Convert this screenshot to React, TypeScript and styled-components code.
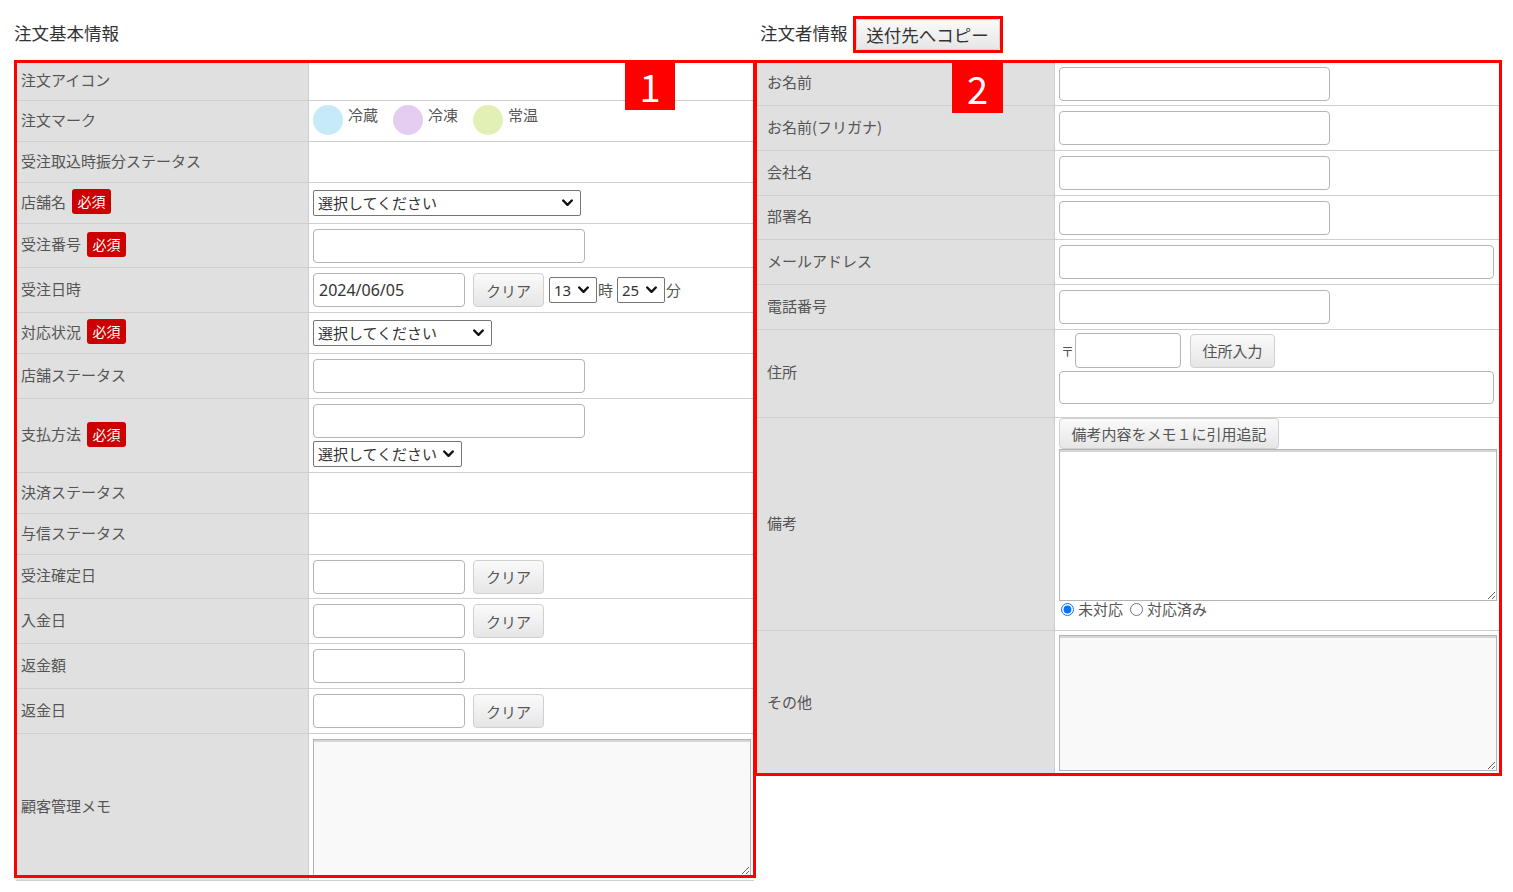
import React from 'react';
import styled, { createGlobalStyle } from 'styled-components';

const FONT = `"Noto Sans CJK JP", "Noto Sans", sans-serif`;
const FIELD_FONT = `"Noto Sans", "Noto Sans CJK JP", sans-serif`;

const Global = createGlobalStyle`
  html, body { margin: 0; padding: 0; background: #fff; }
  body { font-family: ${FONT}; color: #555; font-size: 15px; line-height: 20px; }
  * { box-sizing: border-box; }
`;

const Page = styled.div`
  display: flex;
  align-items: flex-start;
  gap: 3px;
  padding-left: 14px;
`;

const Section = styled.section<{ $w: number }>`
  position: relative;
  flex: none;
  width: ${p => p.$w}px;
`;

const Header = styled.div<{ $pl: number }>`
  height: 62px;
  padding: 4px 0 0 ${p => p.$pl}px;
  display: flex;
  align-items: center;
  gap: 5px;
  font-size: 17.5px;
  color: #333;
`;

const CopyFrame = styled.div`
  display: inline-flex;
  border: 3px solid #f00;
  margin-top: 3px;
`;

const CopyButton = styled.button`
  width: 144px;
  height: 31px;
  padding: 0;
  border: 1px solid #d2d2d2;
  border-radius: 3px;
  background: linear-gradient(#fafafa, #e6e6e6);
  font: 17.5px/1 ${FONT};
  color: #333;
`;

const Table = styled.div<{ $ml: number }>`
  margin-left: ${p => p.$ml}px;
  display: flex;
  flex-direction: column;
`;

const Row = styled.div<{ $h: number; $label: number }>`
  display: grid;
  grid-template-columns: ${p => p.$label}px 1fr;
  height: ${p => p.$h}px;
  border-bottom: 1px solid #cfcfcf;
`;

const Label = styled.div<{ $pl: number }>`
  display: flex;
  align-items: center;
  gap: 6px;
  padding: 0 0 3px ${p => p.$pl}px;
  background: #e0e0e0;
  border-right: 1px solid #cfcfcf;
  color: #555;
  white-space: nowrap;
`;

const Required = styled.span`
  display: inline-block;
  padding: 2px 5.5px;
  border-radius: 3px;
  background: #cc0000;
  color: #fff;
  font-size: 14px;
  line-height: 21px;
`;

const Value = styled.div<{ $top?: number }>`
  display: flex;
  flex-direction: column;
  justify-content: ${p => (p.$top !== undefined ? 'flex-start' : 'center')};
  align-items: flex-start;
  gap: 3px;
  padding: ${p => (p.$top !== undefined ? p.$top : 4)}px 4px 4px 4px;
  background: #fff;
  min-width: 0;
`;

const Line = styled.div<{ $gap?: number }>`
  display: flex;
  align-items: center;
  gap: ${p => p.$gap ?? 8}px;
`;

const TextInput = styled.input<{ $w: number; $h?: number }>`
  width: ${p => p.$w}px;
  height: ${p => p.$h ?? 34}px;
  margin: 0;
  padding: 0 5px;
  border: 1px solid #b4b4b4;
  border-radius: 4px;
  background: #fff;
  font: 16px ${FIELD_FONT};
  color: #333;
`;

const Button = styled.button<{ $w: number; $h?: number }>`
  width: ${p => p.$w}px;
  height: ${p => p.$h ?? 34}px;
  margin: 0;
  padding: 0;
  border: 1px solid #d0d0d0;
  border-radius: 4px;
  background: linear-gradient(#fafafa, #e6e6e6);
  font: 15px ${FONT};
  color: #555;
`;

const SelectWrap = styled.span<{ $w: number }>`
  position: relative;
  display: inline-flex;
  width: ${p => p.$w}px;
  height: 26px;
`;

const SelectField = styled.select`
  appearance: none;
  -webkit-appearance: none;
  width: 100%;
  height: 100%;
  margin: 0;
  padding: 0 20px 0 4px;
  border: 1px solid #767676;
  border-radius: 2px;
  background: #fff;
  font: 15px/24px ${FIELD_FONT};
  color: #333;
`;

const Chevron = styled.svg`
  position: absolute;
  right: 8px;
  top: 50%;
  width: 11px;
  height: 8px;
  margin-top: -4px;
  pointer-events: none;
`;

const Unit = styled.span`
  margin-left: -4px;
  margin-right: -1px;
  color: #555;
`;

const Memo = styled.textarea<{ $w: number; $h: number; $bg: string }>`
  display: block;
  width: ${p => p.$w}px;
  height: ${p => p.$h}px;
  margin: 0;
  border: 1px solid #b4b4b4;
  box-shadow: inset 0 2px 0 #d6d6d6;
  background: ${p => p.$bg};
  font: 15px ${FONT};
  resize: both;
`;

const Marks = styled.div`
  display: flex;
  align-items: flex-start;
  gap: 15px;
`;

const Mark = styled.div`
  display: flex;
  align-items: flex-start;
  gap: 5px;
  line-height: 20px;
  color: #555;
`;

const Dot = styled.span<{ $c: string }>`
  width: 30px;
  height: 30px;
  border-radius: 50%;
  background: ${p => p.$c};
`;

const Postal = styled.span`
  font-size: 13px;
  margin: 0 1px 0 2px;
`;

const Radios = styled.div`
  display: flex;
  align-items: center;
  height: 20px;
  margin-top: -5px;
  color: #555;
`;

const RadioLabel = styled.label`
  display: inline-flex;
  align-items: center;
  gap: 4px;
  margin-right: 5px;
  input { margin: 0 0 0 2px; width: 13px; height: 13px; }
`;

const Outline = styled.div<{ $x: number; $y: number; $w: number; $h: number }>`
  position: absolute;
  left: ${p => p.$x}px;
  top: ${p => p.$y}px;
  width: ${p => p.$w}px;
  height: ${p => p.$h}px;
  border: 3px solid #f00;
  pointer-events: none;
`;

const Marker = styled.div<{ $x: number; $y: number; $w: number; $h: number }>`
  position: absolute;
  left: ${p => p.$x}px;
  top: ${p => p.$y}px;
  width: ${p => p.$w}px;
  height: ${p => p.$h}px;
  display: flex;
  align-items: center;
  justify-content: center;
  background: #f00;
  color: #fff;
  font: 38px/1 ${FONT};
  pointer-events: none;
`;

const L = 293;
const R = 298;

const LeftRow = ({ h, label, req, children, top }: { h: number; label: string; req?: boolean; children?: React.ReactNode; top?: number }) => (
  <Row $h={h} $label={L}>
    <Label $pl={5}>
      {label}
      {req && <Required>必須</Required>}
    </Label>
    <Value $top={top}>{children}</Value>
  </Row>
);

const RightRow = ({ h, label, children, top }: { h: number; label: string; children?: React.ReactNode; top?: number }) => (
  <Row $h={h} $label={R}>
    <Label $pl={10}>{label}</Label>
    <Value $top={top}>{children}</Value>
  </Row>
);

const Select = ({ w, text }: { w: number; text: string }) => (
  <SelectWrap $w={w}>
    <SelectField defaultValue={text}>
      <option value={text}>{text}</option>
    </SelectField>
    <Chevron viewBox="0 0 11 8">
      <path d="M1.2 1.5 L5.5 5.8 L9.8 1.5" fill="none" stroke="#111" strokeWidth="2.4" strokeLinecap="round" strokeLinejoin="round" />
    </Chevron>
  </SelectWrap>
);

export default function App() {
  return (
    <>
      <Global />
      <Page>
        <Section $w={740}>
          <Header $pl={0}>注文基本情報</Header>
          <Table $ml={2}>
            <LeftRow h={39} label="注文アイコン" />
            <LeftRow h={41} label="注文マーク" top={4}>
              <Marks>
                <Mark><Dot $c="#c6eaf8" />冷蔵</Mark>
                <Mark><Dot $c="#e5cdf2" />冷凍</Mark>
                <Mark><Dot $c="#e3f0b5" />常温</Mark>
              </Marks>
            </LeftRow>
            <LeftRow h={41} label="受注取込時振分ステータス" />
            <LeftRow h={41} label="店舗名" req>
              <Select w={268} text="選択してください" />
            </LeftRow>
            <LeftRow h={44} label="受注番号" req>
              <TextInput $w={272} />
            </LeftRow>
            <LeftRow h={45} label="受注日時">
              <Line $gap={5}>
                <Line>
                  <TextInput $w={152} defaultValue="2024/06/05" />
                  <Button $w={71}>クリア</Button>
                </Line>
                <Line $gap={5}>
                  <Select w={48} text="13" />
                  <Unit>時</Unit>
                </Line>
                <Line $gap={5}>
                  <Select w={48} text="25" />
                  <Unit>分</Unit>
                </Line>
              </Line>
            </LeftRow>
            <LeftRow h={41} label="対応状況" req>
              <Select w={179} text="選択してください" />
            </LeftRow>
            <LeftRow h={45} label="店舗ステータス">
              <TextInput $w={272} />
            </LeftRow>
            <LeftRow h={74} label="支払方法" req>
              <TextInput $w={272} />
              <Select w={149} text="選択してください" />
            </LeftRow>
            <LeftRow h={41} label="決済ステータス" />
            <LeftRow h={41} label="与信ステータス" />
            <LeftRow h={44} label="受注確定日">
              <Line><TextInput $w={152} /><Button $w={71}>クリア</Button></Line>
            </LeftRow>
            <LeftRow h={45} label="入金日">
              <Line><TextInput $w={152} /><Button $w={71}>クリア</Button></Line>
            </LeftRow>
            <LeftRow h={45} label="返金額">
              <TextInput $w={152} />
            </LeftRow>
            <LeftRow h={45} label="返金日">
              <Line><TextInput $w={152} /><Button $w={71}>クリア</Button></Line>
            </LeftRow>
            <LeftRow h={147} label="顧客管理メモ">
              <Memo $w={438} $h={137} $bg="#f9f9f9" />
            </LeftRow>
          </Table>
          <Outline $x={0} $y={60} $w={742} $h={818} />
          <Marker $x={611} $y={62} $w={50} $h={48}>1</Marker>
        </Section>

        <Section $w={743}>
          <Header $pl={3}>
            注文者情報
            <CopyFrame><CopyButton>送付先へコピー</CopyButton></CopyFrame>
          </Header>
          <Table $ml={0}>
            <RightRow h={44} label="お名前"><TextInput $w={271} /></RightRow>
            <RightRow h={45} label="お名前(フリガナ)"><TextInput $w={271} /></RightRow>
            <RightRow h={45} label="会社名"><TextInput $w={271} /></RightRow>
            <RightRow h={44} label="部署名"><TextInput $w={271} /></RightRow>
            <RightRow h={45} label="メールアドレス"><TextInput $w={435} /></RightRow>
            <RightRow h={45} label="電話番号"><TextInput $w={271} /></RightRow>
            <RightRow h={88} label="住所" top={3}>
              <Line $gap={9}>
                <Line $gap={0}>
                  <Postal>〒</Postal>
                  <TextInput $w={106} $h={35} />
                </Line>
                <Button $w={85}>住所入力</Button>
              </Line>
              <TextInput $w={435} $h={33} />
            </RightRow>
            <RightRow h={213} label="備考" top={0}>
              <Button $w={220} $h={31}>備考内容をメモ１に引用追記</Button>
              <Memo $w={438} $h={152} $bg="#fff" style={{ marginTop: -3 }} />
              <Radios>
                <RadioLabel><input type="radio" name="bikou" defaultChecked />未対応</RadioLabel>
                <RadioLabel><input type="radio" name="bikou" />対応済み</RadioLabel>
              </Radios>
            </RightRow>
            <RightRow h={145} label="その他">
              <Memo $w={438} $h={136} $bg="#f9f9f9" />
            </RightRow>
          </Table>
          <Outline $x={-3} $y={60} $w={748} $h={716} />
          <Marker $x={195} $y={62} $w={51} $h={51}>2</Marker>
        </Section>
      </Page>
    </>
  );
}
